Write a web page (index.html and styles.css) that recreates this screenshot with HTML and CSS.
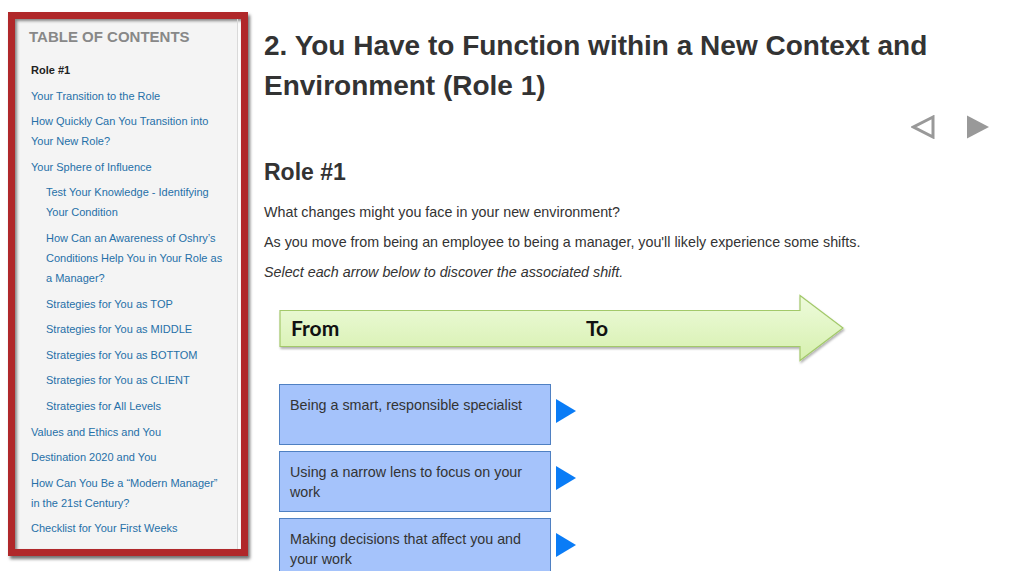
FILE: index.html
```html
<!DOCTYPE html>
<html lang="en">
<head>
<meta charset="utf-8">
<title>Role #1</title>
<link rel="stylesheet" href="styles.css">
</head>
<body>
<div class="page">
  <aside class="toc">
    <div class="toc-inner">
      <h3 class="toc-title">TABLE OF CONTENTS</h3>
      <ul class="toc-list">
        <li class="current">Role #1</li>
        <li><a>Your Transition to the Role</a></li>
        <li><a>How Quickly Can You Transition into Your New Role?</a></li>
        <li><a>Your Sphere of Influence</a></li>
        <li class="sub"><a>Test Your Knowledge - Identifying Your Condition</a></li>
        <li class="sub"><a>How Can an Awareness of Oshry’s Conditions Help You in Your Role as a Manager?</a></li>
        <li class="sub"><a>Strategies for You as TOP</a></li>
        <li class="sub"><a>Strategies for You as MIDDLE</a></li>
        <li class="sub"><a>Strategies for You as BOTTOM</a></li>
        <li class="sub"><a>Strategies for You as CLIENT</a></li>
        <li class="sub"><a>Strategies for All Levels</a></li>
        <li><a>Values and Ethics and You</a></li>
        <li><a>Destination 2020 and You</a></li>
        <li><a>How Can You Be a “Modern Manager” in the 21st Century?</a></li>
        <li><a>Checklist for Your First Weeks</a></li>
      </ul>
    </div>
  </aside>

  <main class="main">
    <h1 class="title">2. You Have to Function within a New Context and Environment (Role 1)</h1>
    <div class="pager">
      <svg class="pager-btn" width="24" height="24" viewBox="0 0 24 24"><polygon points="22,2 2.5,12 22,22" fill="none" stroke="#999" stroke-width="3" stroke-linejoin="miter"/></svg>
      <svg class="pager-btn" width="24" height="24" viewBox="0 0 24 24"><polygon points="1,0.5 23,12 1,23.5" fill="#999"/></svg>
    </div>
    <h2 class="section">Role #1</h2>
    <p class="text">What changes might you face in your new environment?</p>
    <p class="text">As you move from being an employee to being a manager, you'll likely experience some shifts.</p>
    <p class="text note">Select each arrow below to discover the associated shift.</p>

    <div class="shift-arrow">
      <svg class="shift-arrow-bg" width="570" height="72" viewBox="0 0 570 72">
        <defs>
          <linearGradient id="g" x1="0" y1="0" x2="0" y2="1">
            <stop offset="0" stop-color="#eefbdc"/>
            <stop offset="1" stop-color="#d6f0ae"/>
          </linearGradient>
          <filter id="s" x="-5%" y="-20%" width="110%" height="150%">
            <feDropShadow dx="1" dy="2" stdDeviation="1.2" flood-color="#000" flood-opacity="0.3"/>
          </filter>
        </defs>
        <polygon points="2,16.5 522,16.5 522,1.5 565,34 522,66.5 522,52.5 2,52.5" fill="url(#g)" stroke="#a3c96a" stroke-width="1.2" filter="url(#s)"/>
      </svg>
      <div class="shift-labels">
        <span class="label-from">From</span>
        <span class="label-to">To</span>
      </div>
    </div>

    <div class="shifts">
      <div class="shift-row">
        <div class="shift-box">Being a smart, responsible specialist</div>
        <svg class="play" width="20" height="24" viewBox="0 0 20 24"><polygon points="0,0 20,12 0,24" fill="#0a7cf6"/></svg>
      </div>
      <div class="shift-row">
        <div class="shift-box">Using a narrow lens to focus on your work</div>
        <svg class="play" width="20" height="24" viewBox="0 0 20 24"><polygon points="0,0 20,12 0,24" fill="#0a7cf6"/></svg>
      </div>
      <div class="shift-row">
        <div class="shift-box">Making decisions that affect you and your work</div>
        <svg class="play" width="20" height="24" viewBox="0 0 20 24"><polygon points="0,0 20,12 0,24" fill="#0a7cf6"/></svg>
      </div>
    </div>
  </main>
</div>
</body>
</html>
```

FILE: styles.css
```css
html, body {
  margin: 0;
  padding: 0;
  background: #ffffff;
  font-family: "Liberation Sans", Arial, sans-serif;
  color: #333333;
  overflow: hidden;
}

.page {
  display: flex;
  align-items: flex-start;
  height: 571px;
}

/* ---------- Table of contents ---------- */
.toc {
  flex: none;
  width: 240px;
  height: 544px;
  box-sizing: border-box;
  margin: 12px 0 0 8px;
  border: 7px solid #b0282a;
  background: linear-gradient(to left, #fbfbfb 3px, #f4f4f4 3px);
  box-shadow: 2px 3px 3px rgba(0, 0, 0, 0.55), inset 2px 2px 3px rgba(0, 0, 0, 0.45);
  display: flex;
}

.toc-inner {
  flex: 1;
  margin-right: 3px;
  border-right: 1px solid #d9d9d9;
  padding: 9px 12px 0 14px;
}

.toc-title {
  margin: 0;
  font-size: 15px;
  line-height: 18px;
  font-weight: bold;
  color: #888888;
}

.toc-list {
  list-style: none;
  margin: 14px 0 0;
  padding: 0 0 0 2px;
  font-size: 11px;
  line-height: 20px;
}

.toc-list li {
  margin-bottom: 5.6px;
}

.toc-list li a {
  color: #2670a8;
  text-decoration: none;
}

.toc-list li.current {
  font-weight: bold;
  color: #222222;
}

.toc-list li.sub {
  padding-left: 15px;
}

/* ---------- Main ---------- */
.main {
  flex: 1;
  margin-left: 16px;
  padding-right: 36px;
}

.title {
  margin: 26px 0 0;
  font-size: 28px;
  line-height: 40px;
  font-weight: bold;
  color: #333333;
}

.pager {
  display: flex;
  justify-content: flex-end;
  gap: 31px;
  margin-top: 9px;
  height: 24px;
}

.pager-btn {
  display: block;
}

.section {
  margin: 19px 0 0;
  font-size: 23px;
  line-height: 28px;
  font-weight: bold;
  color: #333333;
}

.text {
  margin: 10px 0 0;
  font-size: 14.3px;
  line-height: 20px;
  color: #333333;
}

.section + .text {
  margin-top: 15.5px;
}

.note {
  font-style: italic;
}

/* ---------- Shift arrow ---------- */
.shift-arrow {
  position: relative;
  width: 570px;
  height: 72px;
  margin: 12px 0 0 14px;
}

.shift-arrow-bg {
  position: absolute;
  left: 0;
  top: 0;
}

.shift-labels {
  position: relative;
  display: flex;
  align-items: center;
  height: 68px;
  padding-left: 13px;
  font-family: Lato, "Liberation Sans", sans-serif;
  font-weight: 700;
  font-size: 21px;
  color: #111111;
}

.label-from {
  width: 295px;
}

/* ---------- Shift boxes ---------- */
.shifts {
  margin: 18px 0 0 15px;
  display: flex;
  flex-direction: column;
  gap: 6px;
}

.shift-row {
  display: flex;
  align-items: flex-start;
}

.shift-box {
  width: 272px;
  height: 61px;
  box-sizing: border-box;
  padding: 10px 10px;
  background: #a5c3fb;
  border: 1px solid #4f80c2;
  font-size: 14.3px;
  line-height: 20px;
  color: #333333;
}

.play {
  display: block;
  margin: 15px 0 0 5px;
}
```
